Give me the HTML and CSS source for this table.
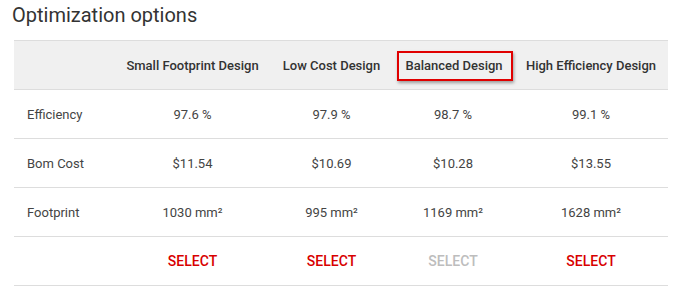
FILE: index.html
```html
<!DOCTYPE html>
<html>
<head>
<meta charset="utf-8">
<link rel="stylesheet" href="styles.css">
</head>
<body>
<h2 class="title">Optimization options</h2>
<table class="opt">
  <colgroup>
    <col class="c-label"><col class="c1"><col class="c2"><col class="c3"><col class="c4">
  </colgroup>
  <thead>
    <tr>
      <th></th>
      <th>Small Footprint Design</th>
      <th>Low Cost Design</th>
      <th><span class="highlight">Balanced Design</span></th>
      <th>High Efficiency Design</th>
    </tr>
  </thead>
  <tbody>
    <tr><td class="label">Efficiency</td><td>97.6 %</td><td>97.9 %</td><td>98.7 %</td><td>99.1 %</td></tr>
    <tr><td class="label">Bom Cost</td><td>$11.54</td><td>$10.69</td><td>$10.28</td><td>$13.55</td></tr>
    <tr><td class="label">Footprint</td><td>1030 mm²</td><td>995 mm²</td><td>1169 mm²</td><td>1628 mm²</td></tr>
    <tr><td class="label"></td><td><span class="select">SELECT</span></td><td><span class="select">SELECT</span></td><td><span class="select disabled">SELECT</span></td><td><span class="select">SELECT</span></td></tr>
  </tbody>
</table>
</body>
</html>
```
FILE: styles.css
```css
html, body {
  margin: 0;
  padding: 0;
  background: #ffffff;
}
body {
  font-family: Roboto, "Liberation Sans", Arial, sans-serif;
  padding: 0 14px;
}
.title {
  margin: 0 0 0 -2px;
  padding: 2px 0 0 0;
  font-size: 20px;
  font-weight: 400;
  line-height: 26px;
  color: #333333;
  height: 40px;
  box-sizing: border-box;
}
.opt {
  border-collapse: collapse;
  table-layout: fixed;
  width: 654px;
  font-size: 13px;
}
.c-label { width: 100px; }
.c1 { width: 157px; }
.c2 { width: 121px; }
.c3 { width: 122px; }
.c4 { width: 154px; }
.opt th, .opt td {
  height: 48px;
  padding: 0;
  text-align: center;
  border-top: 1px solid #dddddd;
  border-bottom: 1px solid #dddddd;
  color: #444444;
  vertical-align: middle;
}
.opt thead tr {
  background: #f0f0f0;
}
.opt th {
  font-weight: 500;
  color: #333333;
}
.opt td.label {
  text-align: left;
  padding-left: 13px;
}
.highlight {
  display: inline-block;
  position: relative;
  top: 1px;
  left: 2px;
  border: 2px solid #e00000;
  padding: 5px 8px 6px 6px;
  box-shadow: 1px 2px 3px rgba(0,0,0,0.35);
}
.select {
  color: #d80000;
  font-size: 14px;
  font-weight: 500;
}
.select.disabled {
  color: #bdbdbd;
}
```
